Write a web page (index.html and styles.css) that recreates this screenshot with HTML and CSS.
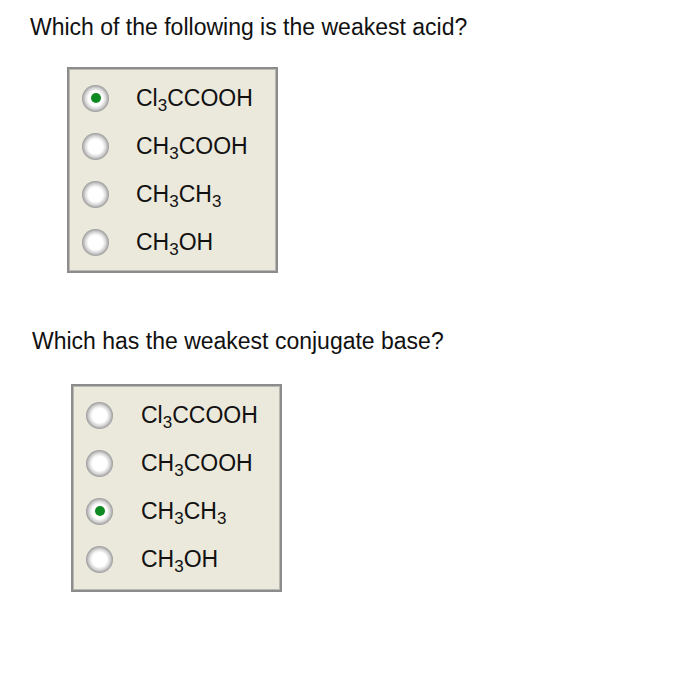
FILE: index.html
```html
<!DOCTYPE html>
<html>
<head>
<meta charset="utf-8">
<link rel="stylesheet" href="styles.css">
</head>
<body>
<div class="page">
  <section class="question q1">
    <h2 class="prompt">Which of the following is the weakest acid?</h2>
    <div class="choices">
      <div class="choice"><span class="radio checked"></span><span class="label">Cl<sub>3</sub>CCOOH</span></div>
      <div class="choice"><span class="radio"></span><span class="label">CH<sub>3</sub>COOH</span></div>
      <div class="choice"><span class="radio"></span><span class="label">CH<sub>3</sub>CH<sub>3</sub></span></div>
      <div class="choice"><span class="radio"></span><span class="label">CH<sub>3</sub>OH</span></div>
    </div>
  </section>
  <section class="question q2">
    <h2 class="prompt">Which has the weakest conjugate base?</h2>
    <div class="choices">
      <div class="choice"><span class="radio"></span><span class="label">Cl<sub>3</sub>CCOOH</span></div>
      <div class="choice"><span class="radio"></span><span class="label">CH<sub>3</sub>COOH</span></div>
      <div class="choice"><span class="radio checked"></span><span class="label">CH<sub>3</sub>CH<sub>3</sub></span></div>
      <div class="choice"><span class="radio"></span><span class="label">CH<sub>3</sub>OH</span></div>
    </div>
  </section>
</div>
</body>
</html>
```
FILE: styles.css
```css
html, body {
  margin: 0;
  padding: 0;
  background: #fff;
}
body {
  font-family: "Liberation Sans", Arial, sans-serif;
  color: #111;
}
.page {
  width: 700px;
  height: 680px;
  padding-top: 12px;
  box-sizing: border-box;
}
.prompt {
  margin: 0;
  font-weight: normal;
  font-size: 23px;
  line-height: 30px;
}
.q1 .prompt {
  padding-left: 30px;
}
.q1 .choices {
  margin: 25px 0 0 67px;
  height: 206px;
}
.q2 {
  margin-top: 53px;
}
.q2 .prompt {
  padding-left: 32px;
}
.q2 .choices {
  margin: 28px 0 0 71px;
  height: 208px;
}
.choices {
  width: 211px;
  box-sizing: border-box;
  background: #ebe8dc;
  border: 2px solid #8c8c8c;
  box-shadow: inset 0 0 0 1px #b9b8b2;
  padding: 5px 0 9px 0;
}
.choice {
  height: 48px;
  display: flex;
  align-items: center;
}
.radio {
  width: 27px;
  height: 27px;
  border-radius: 50%;
  margin-left: 13px;
  margin-right: 27px;
  flex: none;
  box-sizing: border-box;
  background: radial-gradient(circle at 50% 50%, #ffffff 0, #ffffff 38%, #d8d8d8 54%, #8e8e8e 74%, #626262 88%, #858585 100%);
  display: flex;
  align-items: center;
  justify-content: center;
}
.q2 .radio {
  margin-left: 13px;
  margin-right: 28px;
}
.radio.checked::after {
  content: "";
  width: 10px;
  height: 10px;
  border-radius: 50%;
  background: #0d8a22;
}
.label {
  font-size: 23px;
  line-height: 26px;
  white-space: nowrap;
}
.label sub {
  font-size: 17px;
  vertical-align: -5px;
  line-height: 0;
}
```
